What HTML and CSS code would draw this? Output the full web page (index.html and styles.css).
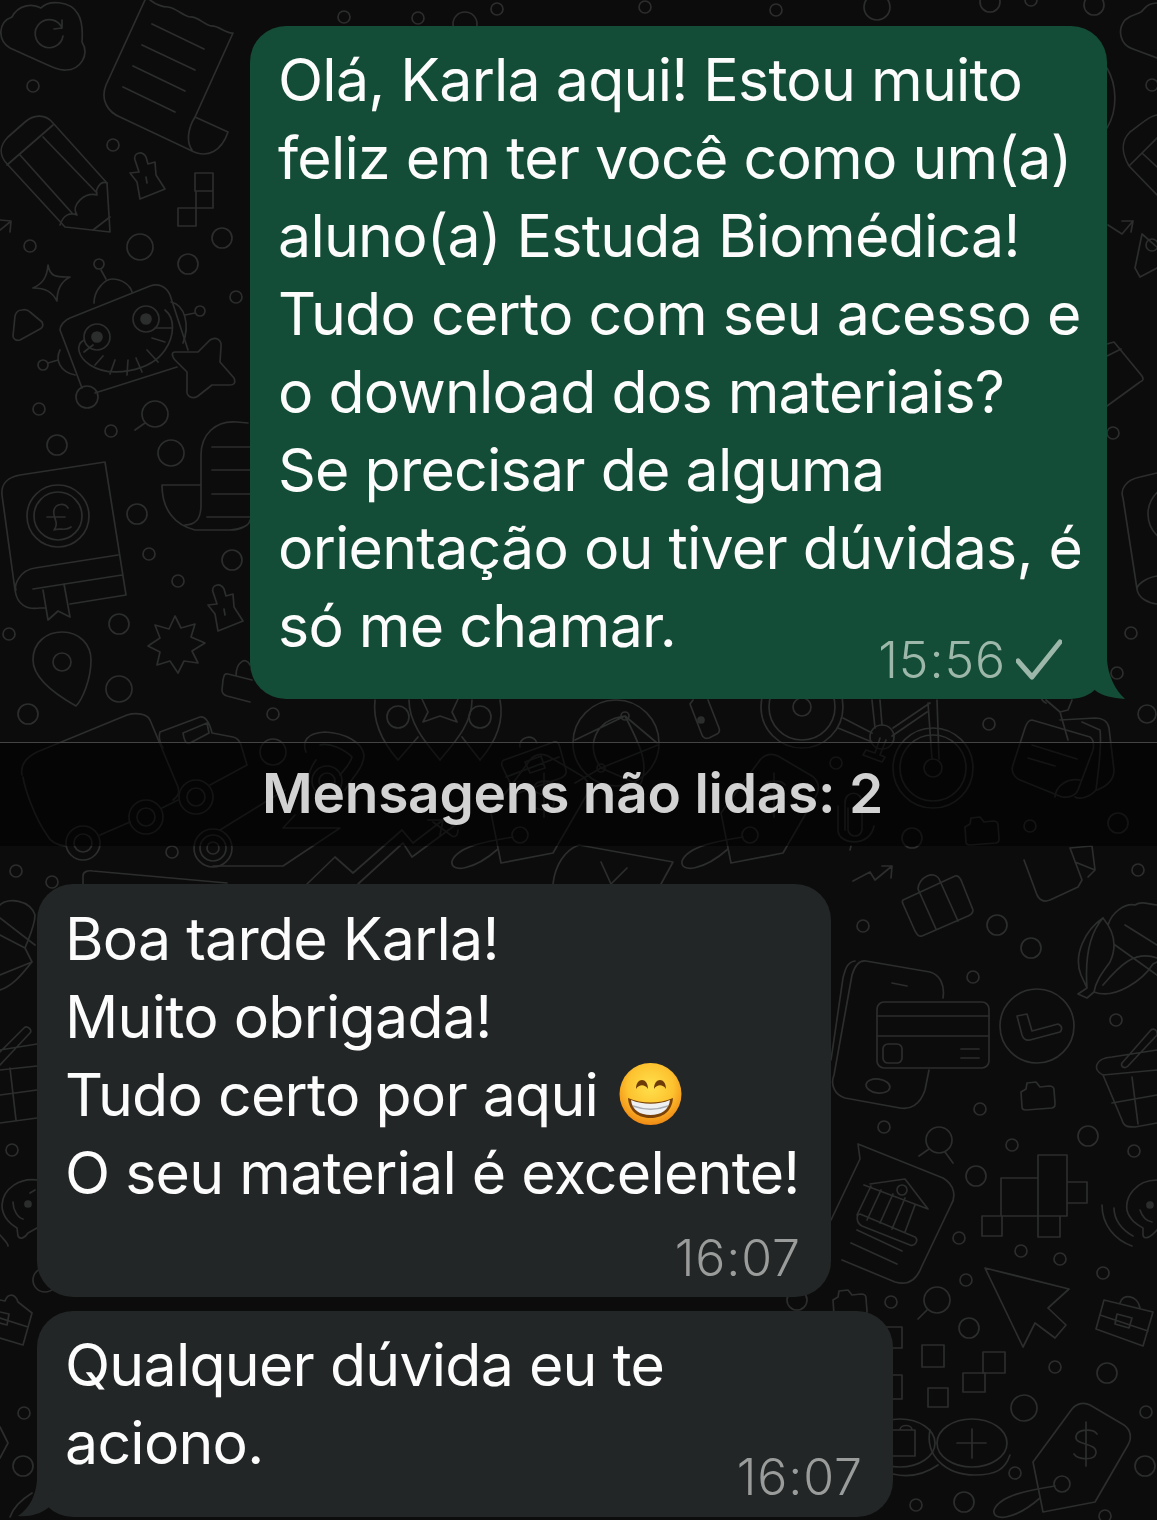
FILE: index.html
```html
<!DOCTYPE html>
<html lang="pt-BR">
<head>
<meta charset="utf-8">
<title>Conversa</title>
<link rel="stylesheet" href="styles.css">
</head>
<body>
<main class="chat">
<svg class="wallpaper" width="1157" height="1520" viewBox="0 0 1157 1520" aria-hidden="true">
  <defs>
    <g id="tag">
      <path d="M1033 1462L1072 1409C1077 1403 1084 1402 1090 1405L1124 1425C1131 1430 1132 1438 1128 1445L1095 1502L1043 1512Z"/>
      <path d="M1086 1422V1466M1097 1434C1094 1429 1078 1428 1076 1436C1074 1446 1097 1442 1096 1453C1095 1461 1078 1460 1074 1454"/>
      <circle cx="1062" cy="1484" r="8"/>
      <path d="M1055 1486C1030 1490 1000 1495 994 1510C992 1522 1015 1520 1040 1498"/>
    </g>
    <g id="folder">
      <path d="M1021 1092L1022 1107C1022 1109 1024 1110 1026 1110L1052 1108C1055 1107 1055 1106 1055 1103L1054 1090C1054 1087 1052 1086 1049 1086L1040 1087L1036 1082L1027 1083L1026 1089Z"/>
    </g>
    <g id="lens">
      <circle cx="155" cy="414" r="13"/>
      <path d="M145 423L135 430"/>
    </g>
    <g id="pushpin">
      <path d="M139 172L135 160C133 153 142 150 146 157L148 164L155 162L156 175L165 189L140 199L137 182L130 173ZM146 177L147 183"/>
    </g>
  </defs>
  <!-- small rings -->
  <g>
    <circle cx="33" cy="86" r="6"/><circle cx="113" cy="145" r="6"/><circle cx="140" cy="247" r="13"/><circle cx="188" cy="264" r="10"/><circle cx="222" cy="238" r="10"/><circle cx="30" cy="246" r="6"/><circle cx="236" cy="297" r="6"/>
    <circle cx="39" cy="409" r="6"/><circle cx="57" cy="445" r="10"/><circle cx="111" cy="431" r="6"/><circle cx="171" cy="453" r="13"/><circle cx="137" cy="514" r="10"/><circle cx="149" cy="554" r="6"/><circle cx="232" cy="560" r="10"/><circle cx="178" cy="581" r="6"/><circle cx="9" cy="634" r="6"/><circle cx="119" cy="624" r="10"/><circle cx="119" cy="689" r="13"/><circle cx="28" cy="714" r="10"/>
    <circle cx="273" cy="714" r="6"/><circle cx="273" cy="752" r="13"/><circle cx="172" cy="852" r="6"/><circle cx="16" cy="871" r="6"/><circle cx="52" cy="882" r="6"/>
    <circle cx="1131" cy="633" r="6"/><circle cx="1117" cy="673" r="6"/><circle cx="989" cy="724" r="6"/><circle cx="1147" cy="714" r="9"/><circle cx="912" cy="838" r="10"/><circle cx="1030" cy="826" r="6"/><circle cx="1118" cy="823" r="10"/><circle cx="836" cy="763" r="6"/>
    <circle cx="863" cy="926" r="6"/><circle cx="997" cy="925" r="10"/><circle cx="1031" cy="948" r="10"/><circle cx="1138" cy="870" r="6"/><circle cx="973" cy="977" r="6"/><circle cx="1116" cy="1020" r="6"/><circle cx="980" cy="1109" r="6"/><circle cx="884" cy="1127" r="6"/><circle cx="1088" cy="1136" r="10"/><circle cx="1134" cy="1151" r="6"/><circle cx="1012" cy="1145" r="6"/><circle cx="976" cy="1176" r="10"/><circle cx="959" cy="1238" r="6"/><circle cx="1021" cy="1251" r="6"/><circle cx="1060" cy="1259" r="6"/><circle cx="966" cy="1280" r="6"/><circle cx="1103" cy="1273" r="6"/><circle cx="891" cy="1302" r="6"/><circle cx="969" cy="1328" r="10"/><circle cx="1055" cy="1367" r="6"/><circle cx="1107" cy="1373" r="10"/><circle cx="1024" cy="1408" r="13"/><circle cx="1146" cy="1412" r="6"/><circle cx="1015" cy="1473" r="6"/><circle cx="1145" cy="1466" r="10"/><circle cx="964" cy="1502" r="10"/><circle cx="916" cy="1505" r="6"/><circle cx="1105" cy="1516" r="6"/>
    <circle cx="12" cy="1150" r="6"/><circle cx="24" cy="1413" r="6"/><circle cx="23" cy="1466" r="10"/><circle cx="45" cy="1280" r="12"/><circle cx="797" cy="1300" r="10"/>
    <circle cx="1152" cy="85" r="6"/><circle cx="1152" cy="245" r="6"/><circle cx="1113" cy="433" r="6"/>
    <circle cx="344" cy="17" r="6"/><circle cx="418" cy="18" r="6"/><circle cx="465" cy="24" r="12"/><circle cx="497" cy="9" r="6"/><circle cx="645" cy="7" r="6"/><circle cx="776" cy="10" r="6"/><circle cx="877" cy="7" r="13"/><circle cx="1094" cy="5" r="10"/><circle cx="990" cy="2" r="10"/><circle cx="1031" cy="0" r="6"/>
  </g>
  <!-- cloud -->
  <path d="M10 48C-3 40-2 22 12 17C18 5 32 3 41 8C48 0 70 0 78 14C84 24 82 38 82 42C90 55 80 70 66 70C58 71 50 66 10 48Z"/>
  <path d="M62 28A14 14 0 1 0 63 36M54 29L62 28L62 20"/>
  <path d="M1157 58L1133 49C1120 45 1117 30 1125 20C1135 12 1140 15 1143 10C1148 3 1155 3 1157 3"/>
  <!-- receipt -->
  <path d="M145 0L106 85C100 100 108 112 120 117L190 150C208 160 222 150 228 132L195 117C188 128 186 142 192 150M195 117L233 33C226 34 218 25 211 26C205 25 197 16 190 17C183 16 176 8 168 7C160 7 154 3 150 0"/>
  <path d="M152 24L204 49M142 45L195 70M133 66L185 91M123 87L175 112"/>
  <!-- pencil -->
  <path d="M8 165C-2 155 0 145 8 137L25 122C33 115 45 113 53 123L107 183L110 232L65 227Z"/>
  <path d="M7 165L53 125M20 155L72 213M43 137L97 193M60 225C63 215 70 212 77 215C70 205 85 192 97 195C95 190 100 180 107 183M93 230L110 217"/>
  <path d="M1157 115C1150 115 1140 125 1130 132C1122 140 1120 150 1129 166L1157 195M1130 165L1157 138M1143 154L1157 167"/>
  <!-- pin, tetris, sparkle -->
  <use href="#pushpin"/>
  <use href="#pushpin" transform="translate(78 432)"/>
  <path d="M178 208H196V226H178ZM196 191H213V208H196ZM195 173H213V191H195Z"/>
  <path d="M48 265C50 278 58 277 70 277C60 282 57 290 57 301C52 292 46 288 33 288C42 284 47 278 48 265Z"/>
  <path d="M22 310C25 309 28 310 30 312L42 322C44 326 42 328 40 329L20 340C16 341 13 339 13 336L15 316C16 312 18 310 22 310Z"/>
  <path d="M0 230L10 222M0 220L11 221L10 232"/>
  <path d="M1108 225L1122 234L1133 221M1122 221H1133L1131 232"/>
  <path d="M1142 234L1135 268L1140 277L1157 268M1142 234L1157 247"/>
  <path d="M1107 344L1114 342L1142 376C1144 379 1143 381 1140 382L1107 406M1107 356L1121 349"/>
  <!-- robot -->
  <path d="M70 318L150 286C158 283 166 286 170 295L188 350M60 330C60 325 65 320 70 318M60 330L82 388M95 393L177 367"/>
  <circle cx="97" cy="337" r="13"/><circle cx="146" cy="319" r="13"/>
  <circle class="solid" cx="97" cy="337" r="5"/><circle class="solid" cx="146" cy="319" r="5"/>
  <path d="M84 340C75 345 78 357 90 365C110 378 150 372 165 350C175 335 175 318 165 310M84 352L93 345M95 365L103 356M110 374L115 360M127 375L128 360M142 372L136 358M158 362L147 350M165 342L152 338M172 328H155"/>
  <path d="M94 303C94 290 105 279 112 279C122 279 130 285 132 292"/>
  <circle cx="99" cy="264" r="5"/><path d="M101 270L106 279"/>
  <circle cx="200" cy="311" r="5"/><path d="M185 315L195 313M171 302C185 305 190 325 183 343"/>
  <circle cx="43" cy="365" r="5"/><path d="M48 363L58 360M60 350C55 360 60 372 75 375"/>
  <path d="M175 352L198 352L210 340C216 336 222 340 221 347L220 362L234 378C236 383 234 385 230 385H212L198 396C192 400 186 396 187 390L187 372L175 360C171 355 172 352 175 352Z"/>
  <circle cx="87" cy="397" r="11"/>
  <path d="M1107 68C1117 85 1118 110 1107 128"/>
  <!-- book -->
  <path d="M105 462L126 595L70 604M105 462L20 475C5 478 1 485 2 495L15 590C17 605 27 610 40 608L46 608M118 555L35 568C20 570 14 585 16 590M122 575L33 589M43 590L48 620L58 611L70 617L64 584"/>
  <circle cx="58" cy="516" r="31"/><circle cx="58" cy="516" r="24"/>
  <path d="M68 508C65 503 56 503 54 510C52 518 60 522 54 530C60 527 65 532 71 527M47 517H65"/>
  <path d="M1157 473L1140 477C1125 480 1120 490 1123 498L1137 589C1138 598 1148 603 1157 604M1157 576C1145 578 1137 585 1137 589"/>
  <circle cx="1178" cy="514" r="30"/>
  <!-- scroll -->
  <path d="M248 423L237 422C215 420 201 435 201 455V505C201 520 195 525 185 525M162 485H200M162 485C162 510 175 525 195 530H230C240 530 250 525 250 520M212 447H250M212 470H250M212 494H250M207 517H250"/>
  <use href="#lens"/>
  <!-- pin and burst -->
  <path d="M76 706C60 697 33 680 33 660C33 642 47 632 62 632C80 632 91 645 91 660C91 680 82 700 76 706Z"/>
  <circle cx="62" cy="662" r="9"/>
  <path d="M175 616L181 628L195 624L191 637L205 643L192 651L198 663L184 661L178 673L170 661L157 665L160 652L148 646L160 638L155 625L169 629Z"/>
  <!-- lock near left -->
  <path d="M228 674L252 680M228 674C224 673 224 676 223 680L222 690C222 693 224 695 227 696L250 702M236 676C236 662 246 656 250 665"/>
  <!-- wagon -->
  <path d="M22 775C20 765 27 757 37 752L127 715C137 712 147 714 150 720L178 787C180 794 177 797 173 800M23 777C25 790 35 818 47 835C50 841 55 845 66 846"/>
  <circle cx="83" cy="843" r="17"/><circle cx="83" cy="843" r="9"/>
  <circle cx="146" cy="817" r="17"/><circle cx="146" cy="817" r="9"/>
  <circle cx="196" cy="797" r="17"/><circle cx="196" cy="797" r="9"/>
  <path d="M100 835L130 822M162 808L178 800M160 732L200 717C206 716 210 725 212 733L233 737C238 738 240 742 241 745L247 765L210 785M160 732C158 738 160 743 163 748M183 733L207 723L209 733L190 743C186 745 184 740 183 733Z"/>
  <!-- kettlebell -->
  <path d="M306 752C302 742 306 733 325 732C345 733 362 742 364 755C364 768 350 780 345 790M320 745C330 742 345 750 352 757C350 765 342 772 340 775M316 760C310 768 308 775 309 782"/>
  <circle cx="327" cy="781" r="15"/><circle cx="327" cy="781" r="8"/>
  <!-- roll -->
  <circle cx="213" cy="848" r="19"/><circle cx="213" cy="848" r="13"/><circle cx="213" cy="848" r="6"/>
  <path d="M220 830L285 790M283 828H340L283 866H213M283 828L295 815"/>
  <path d="M83 884V876C83 872 87 870 93 871L227 883"/>
  <path d="M307 884L335 857L353 873L402 830L413 843L443 820M428 820H443L440 835M358 884L403 843L412 857L458 823"/>
  <path d="M433 822L452 836C456 838 458 834 458 830"/>
  <!-- map pins -->
  <path d="M440 760C428 745 409 725 409 700M472 700C472 725 452 745 440 760M375 700C372 725 385 745 398 760L418 737M462 737L480 760C493 745 505 725 500 700M422 699L428 712L423 722L440 716L457 722L452 712L458 699"/>
  <circle cx="398" cy="717" r="11"/><circle cx="480" cy="717" r="11"/>
  <!-- briefcase -->
  <path d="M504 760L554 742C558 741 559 744 560 748L566 770C567 774 565 776 561 778L521 792C517 794 514 792 513 789L502 766C501 762 502 761 504 760ZM506 777L559 757M520 747C518 737 534 733 537 743M525 762L541 756L545 768L530 773Z"/>
  <!-- globe -->
  <circle cx="616" cy="743" r="43"/>
  <path d="M575 740L625 716L657 743M625 716C640 745 650 765 640 785L601 768L575 783M625 716C595 720 585 745 601 768M601 768L658 745"/>
  <circle cx="625" cy="716" r="4"/><circle cx="601" cy="768" r="4"/>
  <!-- lock -->
  <path d="M693 700L690 704L702 735C703 738 706 739 709 738L717 734C719 733 720 731 719 728L708 700"/>
  <circle class="solid" cx="701" cy="720" r="3"/>
  <!-- bike -->
  <circle cx="802" cy="707" r="41"/><circle cx="802" cy="707" r="33"/><circle cx="802" cy="707" r="9"/>
  <circle cx="933" cy="768" r="40"/><circle cx="933" cy="768" r="33"/><circle cx="933" cy="768" r="9"/>
  <path d="M843 718L872 733M838 728L872 742M928 703L932 759M937 700L939 759M893 728L930 703M892 736L927 712M872 700L875 728M880 700L882 725"/>
  <circle cx="882" cy="737" r="12"/>
  <path d="M880 738L875 753L866 750L863 755L882 762L885 757L880 755L886 740"/>
  <!-- notepad -->
  <path d="M1032 720L1090 737C1094 740 1094 745 1093 750L1078 790C1076 795 1070 798 1062 797L1020 780C1013 777 1011 770 1013 765L1025 728C1027 722 1029 720 1032 720Z"/>
  <path d="M1060 720L1095 718C1103 718 1108 722 1109 728L1114 770C1114 778 1110 785 1097 790M1082 722L1100 730C1102 745 1098 775 1096 790C1090 797 1080 800 1075 797M1032 745L1077 759M1028 758L1055 766M1055 797C1056 785 1068 778 1080 780"/>
  <path d="M1046 703C1040 700 1040 695 1045 693M1046 700L1060 712L1068 710L1072 700M1060 712L1068 740"/>
  <use href="#folder" transform="translate(-56 -265)"/>
  <!-- tags -->
  <use href="#tag"/>
  <use href="#tag" transform="translate(-312 -649)"/>
  <use href="#tag" transform="translate(-542 -649)"/>
  <!-- mic -->
  <path d="M845 830V803C845 790 862 790 862 803V830C860 838 850 838 848 830V808M838 806V830C838 845 870 848 874 826M851 846L850 850"/>
  <!-- check envelope -->
  <path d="M553 884C555 865 565 850 579 845L673 862L661 884M601 862L611 884L627 868"/>
  <!-- trend, suitcase, wallet -->
  <path d="M853 881L870 872L875 880L892 866M882 866H892L891 878"/>
  <path d="M903 900L955 876C958 875 960 878 961 880L973 910C973 914 970 915 968 916L922 936C918 937 917 934 915 931L903 904C902 902 902 901 903 900ZM918 889L936 929M940 881L958 921M918 889C918 878 935 868 940 881"/>
  <path d="M1024 860L1037 895C1040 901 1045 902 1050 900L1078 887L1082 880L1070 848M1075 862L1095 870L1088 877M1070 848L1092 846L1095 870"/>
  <!-- flower -->
  <path d="M1103 918C1085 930 1073 955 1081 975L1087 988L1078 994L1087 998L1094 992C1115 1000 1143 980 1153 964L1157 962M1103 918C1113 930 1118 945 1110 962C1103 972 1096 980 1094 992M1103 918C1088 935 1085 960 1087 988M1108 925C1112 912 1125 903 1135 905C1142 900 1150 905 1157 905M1115 945L1157 975M1125 925L1157 945M1103 985C1120 965 1135 950 1157 958"/>
  <path d="M0 905C8 897 30 900 35 915C35 925 30 935 25 948L32 962L0 975M0 918L35 945M0 935L25 948M0 990C15 985 25 970 32 962"/>
  <!-- phone and card -->
  <path d="M866 961L930 972C940 975 945 985 943 998M929 1070L925 1090C920 1105 910 1110 900 1108L845 1098C835 1095 830 1085 834 1075L852 975C855 965 860 960 866 961M855 961C847 962 845 970 843 978L831 1060"/>
  <path d="M892 983L907 986"/>
  <ellipse cx="878" cy="1086" rx="12" ry="7" transform="rotate(8 878 1086)"/>
  <rect x="877" y="1002" width="112" height="66" rx="7"/>
  <path d="M877 1016H989M877 1036H989M961 1049H979M961 1058H979"/>
  <rect x="883" y="1044" width="19" height="19" rx="5"/>
  <!-- clock -->
  <circle cx="1037" cy="1026" r="37"/>
  <path d="M1017 1016L1027 1014L1032 1031L1058 1024C1063 1026 1062 1030 1060 1032L1030 1040C1025 1041 1023 1038 1022 1035Z"/>
  <use href="#folder"/>
  <use href="#folder" transform="translate(-188 208)"/>
  <!-- basket -->
  <path d="M1157 1050L1112 1057C1095 1058 1092 1070 1103 1075L1157 1070M1103 1075L1122 1120C1124 1127 1128 1127 1135 1127L1157 1123M1112 1103L1157 1095M1132 1077L1138 1124M1122 1063L1150 1031C1153 1027 1158 1030 1157 1035L1128 1066C1125 1069 1120 1067 1122 1063Z"/>
  <path d="M0 1050L37 1044M0 1070L37 1066M0 1095L37 1090M0 1123L37 1118M10 1068L16 1120M0 1065L30 1033C33 1030 27 1025 24 1028L0 1052"/>
  <!-- lenses -->
  <use href="#lens" transform="translate(784 726)"/>
  <path d="M945 1152L953 1163"/>
  <circle cx="937" cy="1300" r="13"/><path d="M927 1310L918 1319"/>
  <!-- bank document -->
  <path d="M858 1144L943 1178C955 1185 956 1197 951 1205L921 1268C915 1283 905 1285 895 1282L842 1260M860 1159L831 1220M858 1144L860 1159"/>
  <path d="M870 1184L905 1179L928 1209L864 1185M871 1186L857 1215M881 1190L867 1220M893 1194L880 1223M905 1198L892 1229M915 1205L905 1232M860 1214L915 1237C919 1240 915 1247 910 1245L862 1226C856 1223 856 1214 860 1214ZM857 1230L902 1251M851 1243L897 1264"/>
  <circle cx="902" cy="1190" r="5"/>
  <!-- tetris cross -->
  <path d="M1038 1155H1067V1216H1038ZM1067 1182H1087V1203H1067ZM1001 1178H1038V1216H1001ZM982 1216H1002V1236H982ZM1038 1216H1060V1237H1038Z"/>
  <!-- chat and waves -->
  <path d="M1157 1180C1135 1180 1125 1198 1127 1210C1129 1220 1138 1225 1143 1228L1143 1235C1144 1240 1150 1238 1157 1230"/>
  <path d="M1102 1205C1102 1225 1115 1240 1132 1246M1114 1208C1114 1220 1122 1230 1133 1236M1140 1210C1142 1216 1146 1221 1152 1222"/>
  <circle class="solid" cx="1150" cy="1205" r="3"/>
  <path d="M37 1180C20 1178 3 1188 2 1205C2 1218 12 1225 17 1228L18 1236C20 1240 25 1238 28 1233L37 1228M13 1202C13 1210 18 1218 23 1219M35 1190L30 1193M0 1235C4 1240 8 1243 8 1246"/>
  <circle class="solid" cx="28" cy="1204" r="3"/>
  <!-- cursor -->
  <path d="M985 1268L1069 1289L1048 1308L1066 1325L1055 1338L1035 1323L1023 1347Z"/>
  <!-- briefcase low -->
  <path d="M1104 1300L1153 1312L1143 1346L1096 1329ZM1100 1315L1148 1331M1120 1303C1122 1293 1138 1295 1140 1308M1117 1314L1132 1318L1129 1328L1115 1324Z"/>
  <path d="M0 1300L5 1301C8 1293 15 1293 18 1302L32 1313L23 1345L0 1338M0 1318L28 1327M0 1312L9 1314L7 1325L0 1323"/>
  <!-- squares -->
  <rect x="922" y="1345" width="22" height="22"/><rect x="928" y="1388" width="20" height="19"/>
  <rect x="885" y="1327" width="17" height="21"/><rect x="885" y="1375" width="17" height="24"/>
  <rect x="963" y="1373" width="22" height="19"/><rect x="983" y="1352" width="22" height="21"/>
  <!-- coins -->
  <ellipse cx="972" cy="1443" rx="35" ry="24"/>
  <path d="M930 1430C925 1455 945 1475 975 1475C995 1475 1005 1470 1010 1455M957 1443H986M972 1429V1458"/>
  <ellipse cx="900" cy="1443" rx="35" ry="24"/>
  <path d="M893 1474C910 1478 925 1474 938 1465M893 1430H915V1456H893M900 1430C900 1424 912 1424 912 1430"/>
  <!-- bottom left scraps -->
  <path d="M0 1427L8 1443L0 1458M10 1517C14 1505 24 1498 32 1493"/>
</svg>

<section class="msg msg-out">
  <p class="msg-text">Olá, Karla aqui! Estou muito<br>feliz em ter você como um(a)<br>aluno(a) Estuda Biomédica!<br>Tudo certo com seu acesso e<br>o download dos materiais?<br>Se precisar de alguma<br>orientação ou tiver dúvidas, é<br>só me chamar.</p>
  <div class="meta meta-out meta-overlap">
    <span>15:56</span>
    <svg class="tick" width="46" height="42" viewBox="0 0 46 42"><path d="M2 22L16 38L44 3"/></svg>
  </div>
  <svg class="tail tail-right" width="60" height="46" viewBox="1070 655 60 46"><path d="M1107 660C1108 675 1115 690 1125 699C1112 698 1103 696 1096 691L1085 680Z"/></svg>
</section>

<div class="unread"><span class="unread-label">Mensagens não lidas: 2</span></div>

<section class="msg msg-in msg-first">
  <p class="msg-text">Boa tarde Karla!<br>Muito obrigada!<br>Tudo certo por aqui <svg class="emoji" width="65" height="65" viewBox="0 0 65 65" role="img" aria-label="😁"><defs><radialGradient id="face" cx="50%" cy="38%" r="62%"><stop offset="0" stop-color="#ffe14d"/><stop offset=".6" stop-color="#fdc22f"/><stop offset="1" stop-color="#f08a14"/></radialGradient></defs><circle cx="32.5" cy="32" r="31" fill="url(#face)"/><path d="M18 27C18 15 30 15 30 27C27 22 21 22 18 27ZM36 27C36 15 48 15 48 27C45 22 39 22 36 27Z" fill="#6e3c08"/><path d="M10 36C24 42 41 42 55 36C54 50 44 56 32.5 56C21 56 11 50 10 36Z" fill="#7a4208"/><path d="M13 38C25 43 40 43 52 38C51 48 43 53 32.5 53C22 53 14 48 13 38Z" fill="#eef0f2"/><path d="M15 44C26 48 39 48 50 44" fill="none" stroke="#a9aeb4" stroke-width="1.5"/></svg><br>O seu material é excelente!</p>
  <div class="meta meta-in"><span>16:07</span></div>
</section>

<section class="msg msg-in msg-second">
  <p class="msg-text">Qualquer dúvida eu te<br>aciono.</p>
  <div class="meta meta-in meta-overlap-in"><span>16:07</span></div>
  <svg class="tail tail-left" width="60" height="46" viewBox="10 1475 60 46"><path d="M37 1480C36 1495 30 1508 18 1516C30 1517 40 1514 48 1508L60 1495Z"/></svg>
</section>
</main>
</body>
</html>
```

FILE: styles.css
```css
* { box-sizing: border-box; }

html, body {
  margin: 0;
  background: #0c0c0c;
}

.chat {
  position: relative;
  width: 1157px;
  height: 1520px;
  overflow: hidden;
  padding-top: 26px;
  display: flex;
  flex-direction: column;
  font-family: Inter, "Liberation Sans", sans-serif;
}

.wallpaper {
  position: absolute;
  left: 0;
  top: 0;
  fill: none;
  stroke: #2c2d2d;
  stroke-width: 1.7;
  stroke-linejoin: round;
  stroke-linecap: round;
}

.wallpaper .solid {
  fill: #2c2d2d;
}

.msg {
  position: relative;
  border-radius: 36px;
  display: flex;
  flex-direction: column;
}

.msg-text {
  margin: 0;
  font-size: 59px;
  line-height: 78px;
  font-weight: 400;
  letter-spacing: -0.75px;
  color: #fbfcfb;
  white-space: nowrap;
}

.msg-out {
  align-self: flex-end;
  width: 857px;
  height: 673px;
  margin-right: 50px;
  padding: 15px 0 0 28px;
  background: #144d37;
}

.msg-in {
  align-self: flex-start;
  margin-left: 37px;
  padding: 16px 0 0 28px;
  background: #232626;
}

.msg-first {
  width: 794px;
  height: 413px;
}

.msg-second {
  width: 856px;
  height: 206px;
  margin-top: 14px;
  padding-top: 15px;
}

.meta {
  display: flex;
  align-items: center;
  justify-content: flex-end;
  gap: 10px;
  font-size: 50px;
  line-height: 58px;
  font-weight: 300;
  letter-spacing: 0.9px;
}

.meta-out {
  color: #9db8ab;
  padding-right: 45px;
}

.meta-overlap {
  margin-top: -34px;
}

.meta-in {
  color: #9a9b9b;
  padding-right: 30px;
  margin-top: 17px;
}

.meta-overlap-in {
  margin-top: -34px;
}

.tick {
  fill: none;
  stroke: #9db8ab;
  stroke-width: 5;
  stroke-linecap: round;
  stroke-linejoin: round;
}

.tail {
  position: absolute;
  bottom: -2px;
}

.tail-right {
  right: -23px;
  fill: #144d37;
}

.tail-left {
  left: -27px;
  bottom: -4px;
  fill: #232626;
}

.unread {
  position: relative;
  height: 104px;
  margin-top: 43px;
  margin-bottom: 38px;
  border-top: 1px solid #444;
  background: rgba(0, 0, 0, 0.55);
  display: flex;
  justify-content: center;
  align-items: center;
  padding: 0 12px 4px 0;
}

.unread-label {
  font-size: 55px;
  line-height: 96px;
  font-weight: 600;
  color: #d2d2d2;
  letter-spacing: -0.25px;
}

.emoji {
  vertical-align: -11px;
  margin-left: 4px;
}
```
